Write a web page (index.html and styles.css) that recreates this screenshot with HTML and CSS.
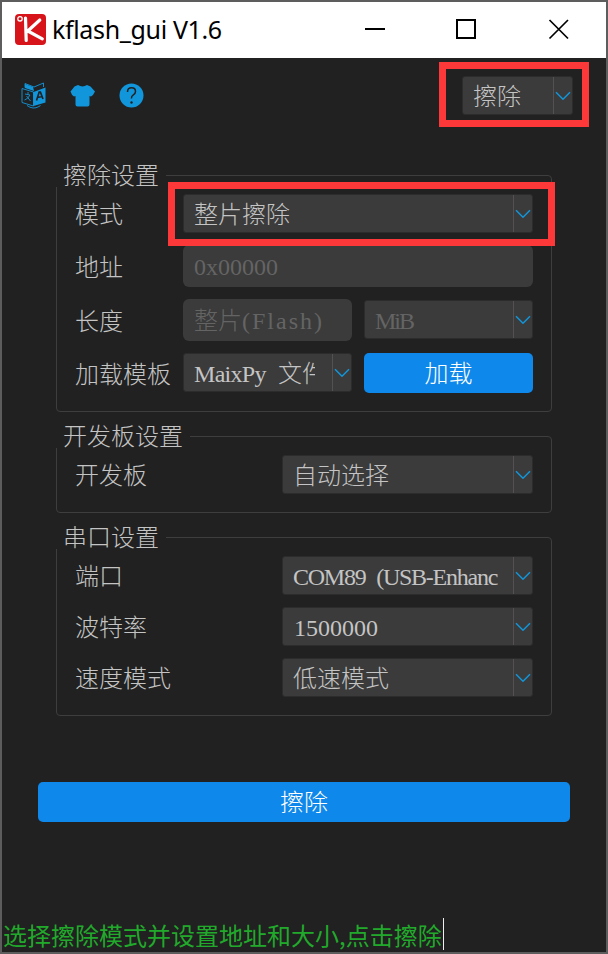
FILE: index.html
```html
<!DOCTYPE html>
<html lang="zh-CN">
<head>
<meta charset="utf-8">
<title>kflash_gui V1.6</title>
<link rel="stylesheet" href="styles.css">
</head>
<body>
<svg width="0" height="0" class="defs"><symbol id="chev" viewBox="0 0 16 10"><path d="M1 1.2 8 8.2 15 1.2" fill="none" stroke="#1296db" stroke-width="1.5"/></symbol></svg>
<div class="window">
  <header class="titlebar">
    <svg class="logo" viewBox="0 0 31 31"><rect width="31" height="31" rx="4" fill="#d7141a"/><circle cx="5" cy="4.800" r="2.200" fill="none" stroke="#fff" stroke-width="1.300"/><path d="M10.500 4 11.200 26.500M24.800 6 12.800 17 27.300 24.800" fill="none" stroke="#fff" stroke-width="3.200" stroke-linecap="round" stroke-linejoin="round"/></svg>
    <span class="title">kflash_gui V1.6</span>
    <svg class="controls" viewBox="0 0 206 22"><path d="M0 11h20" stroke="#000" stroke-width="2"/><rect x="92" y="2" width="18" height="18" fill="none" stroke="#000" stroke-width="2"/><path d="M184.500 2 203 20.500M203 2 184.500 20.500" stroke="#000" stroke-width="1.700"/></svg>
  </header>
  <div class="toolbar">
    <svg class="tool" viewBox="0 0 26 28"><g fill="none" stroke="#1296db" stroke-width=".9"><path d="M1 6.500 12.500 10V24L1 20.500ZM4 5.500V1.500L13 5 22.500 1V5M6 23.500Q12 28 18 24.500L19.500 23.500M4 12l5 1M7 10v2.500M9 13Q7 17 3.500 18M5.500 14 9.500 19"/></g><path d="M12.500 10 24.500 5.500V20.500L12.500 24ZM4 2 12 5 13 9 4 6Z" fill="#1296db"/><path d="M15.500 18.500 18.200 10h1.200L22 17M16.200 15.500 21.500 14.500" fill="none" stroke="#212121" stroke-width="1.700"/></svg>
    <svg class="tool" viewBox="0 0 26 28"><path d="M8 3Q12.500 5.800 17 3L20.500 4.500 25 9.500Q23.500 13 21 14.500L19.500 14V22.500Q19.500 24.500 17.500 24.500H7.500Q5.500 24.500 5.500 22.500V14L4 14.500Q1.500 13 .5 9.500L4.500 4.500Z" fill="#1296db"/></svg>
    <svg class="tool" viewBox="0 0 26 28"><circle cx="12.500" cy="13.500" r="12" fill="#1296db"/><path d="M8.500 10Q8.500 5.800 12.500 5.800T16.500 9.500Q16.500 11.500 14.300 12.900T12.500 16.500" fill="none" stroke="#212121" stroke-width="1.500"/><circle cx="12.500" cy="20.500" r="1.200" fill="#212121"/></svg>
    <div class="combo action marked"><span class="value">擦除</span><span class="arrow"><svg><use href="#chev"/></svg></span></div>
  </div>
  <main>
    <section class="group">
      <h2>擦除设置</h2>
      <div class="grid erase">
        <label>模式</label><div class="combo wide marked mode"><span class="value">整片擦除</span><span class="arrow"><svg><use href="#chev"/></svg></span></div>
        <label>地址</label><div class="edit wide">0x00000</div>
        <label>长度</label><div class="edit">整片<span class="flash">(Flash)</span></div><div class="combo disabled unit"><span class="value mib">MiB</span><span class="arrow"><svg><use href="#chev"/></svg></span></div>
        <label>加载模板</label><div class="combo"><span class="value"><span class="maix">MaixPy </span>文件</span><span class="arrow"><svg><use href="#chev"/></svg></span></div><button class="load">加载</button>
      </div>
    </section>
    <section class="group">
      <h2>开发板设置</h2>
      <div class="grid pair">
        <label>开发板</label><div class="combo"><span class="value">自动选择</span><span class="arrow"><svg><use href="#chev"/></svg></span></div>
      </div>
    </section>
    <section class="group">
      <h2>串口设置</h2>
      <div class="grid pair">
        <label>端口</label><div class="combo"><span class="value port">COM89 (USB-Enhanc</span><span class="arrow"><svg><use href="#chev"/></svg></span></div>
        <label>波特率</label><div class="combo"><span class="value digits">1500000</span><span class="arrow"><svg><use href="#chev"/></svg></span></div>
        <label>速度模式</label><div class="combo"><span class="value">低速模式</span><span class="arrow"><svg><use href="#chev"/></svg></span></div>
      </div>
    </section>
  </main>
  <button class="run">擦除</button>
  <footer class="status"><span>选择擦除模式并设置地址和大小,点击擦除</span><i class="caret"></i></footer>
</div>
</body>
</html>
```
FILE: styles.css
```css
* { box-sizing: border-box; }
body { margin: 0; }
.defs { position: absolute; }
.window {
  width: 608px; height: 954px; border: 2px solid #5d5d5d;
  background: #212121; color: #c4c4c4; overflow: hidden;
  display: flex; flex-direction: column;
  font: 300 24px/36px "Liberation Serif", "Noto Sans CJK SC", serif;
}
.titlebar { height: 56px; flex: none; background: #fff; display: flex; align-items: center; padding-left: 13px; }
.logo { width: 31px; height: 31px; margin-top: -2px; }
.title { font: 400 25px/32px "Noto Sans", sans-serif; color: #000; margin: -2px 0 0 6px; letter-spacing: -.35px; white-space: nowrap; }
.controls { width: 206px; height: 22px; margin: -2px 35px 0 auto; flex: none; }
.toolbar { height: 74px; flex: none; display: flex; align-items: center; padding: 0 33px 0 19px; }
.tool { width: 26px; height: 28px; margin: 2px 23px 0 0; }
main { padding: 43px 54px 0; }
.group { border: 1px solid #3e3e3e; border-radius: 4px; width: 496px; margin-bottom: 24px; }
h2 {
  width: max-content; height: 24px; margin: -13px 0 0 -1px; padding: 0 7px 0 7px;
  background: #212121; font: inherit; line-height: 26px;
}
.grid { display: grid; gap: 12px; padding: 7px 18px 18px; align-items: start; }
.erase { grid-template-columns: 96px 169px 169px; }
.pair { grid-template-columns: 195px 251px; }
label { align-self: stretch; display: flex; align-items: center; padding-top: 3px; white-space: nowrap; line-height: 36px; }
.wide { grid-column: 2 / 4; }
.combo {
  height: 39px; border: 1px solid #2c2c2c; border-radius: 3px; background: #3b3b3b;
  display: flex; position: relative; min-width: 0;
}
.value { flex: 1; min-width: 0; overflow: hidden; margin: 0 17px 0 10px; line-height: 40px; height: 37px; white-space: nowrap; }
.arrow { width: 19px; flex: none; border-left: 1px solid #555051; display: flex; padding: 14px 0 0 1px; }
.arrow svg { width: 16px; height: 10px; }
.edit { height: 42px; border-radius: 6px; background: #3b3b3b; color: #646464; line-height: 44px; padding-left: 11px; white-space: nowrap; overflow: hidden; }
.disabled { color: #646464; }
.unit { margin-top: 1px; }
.digits { padding-left: 1px; }
.port { margin-right: 10px; letter-spacing: -1.25px; word-spacing: 6px; }
.maix { letter-spacing: -.7px; word-spacing: 7px; }
.mib { letter-spacing: -2px; }
.flash { letter-spacing: 2px; }
.action { width: 111px; margin-left: auto; }
.action .value { margin-right: 8px; }
.marked::after { content: ""; position: absolute; z-index: 2; border: 7px solid #fd3838; pointer-events: none; }
.action::after { left: -24px; right: -17px; top: -15px; bottom: -13px; }
.mode::after { left: -16px; right: -23px; top: -13px; bottom: -14px; }
button { border: 0; padding: 3px 0 0; border-radius: 5px; background: #0f88eb; color: #fff; font: inherit; line-height: 37px; height: 40px; }
.run { width: 532px; margin: 42px 0 0 36px; flex: none; }
.status { margin-top: auto; height: 36px; flex: none; display: flex; align-items: flex-start; padding-left: 1px; color: #21a92b; font-family: "Noto Sans CJK SC", sans-serif; font-weight: 400; white-space: nowrap; }
.status span { line-height: 37px; }
.caret { width: 1px; height: 32px; margin: 2px 0 0 1px; background: #eee; }
```
